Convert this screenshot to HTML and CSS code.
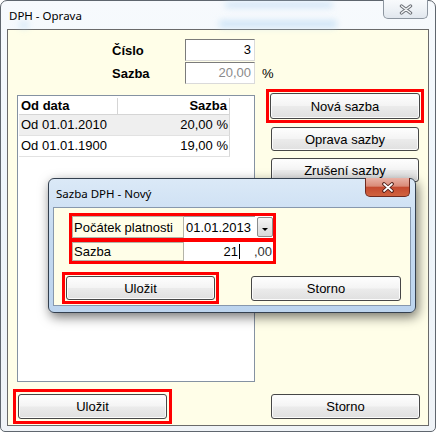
FILE: index.html
```html
<!DOCTYPE html>
<html lang="cs">
<head>
<meta charset="utf-8">
<title>DPH - Oprava</title>
<link rel="stylesheet" href="styles.css">
</head>
<body>
<div class="win">
  <div class="titlebar">
    <span class="title">DPH - Oprava</span>
    <span class="glass g1"></span>
    <span class="glass g2"></span>
    <span class="glass g3"></span>
    <button class="close" aria-label="Zavřít">
      <svg width="14" height="11" viewBox="0 0 14 11"><path d="M2.5 2 L11.5 9 M11.5 2 L2.5 9" stroke="#6d7177" stroke-width="3.4" stroke-linecap="round" fill="none"/><path d="M2.5 2 L11.5 9 M11.5 2 L2.5 9" stroke="#f4f6f8" stroke-width="1.4" stroke-linecap="round" fill="none"/></svg>
    </button>
  </div>
  <div class="client">
    <div class="form">
      <span class="flabel">Číslo</span>
      <span class="inp">3</span>
      <span></span>
      <span class="flabel">Sazba</span>
      <span class="inp dis">20,00</span>
      <span class="pct">%</span>
    </div>
    <div class="main">
      <div class="list">
        <div class="row head"><span class="c1">Od data</span><span class="c2">Sazba</span></div>
        <div class="row data alt"><span class="c1">Od 01.01.2010</span><span class="c2">20,00 %</span></div>
        <div class="row data"><span class="c1">Od 01.01.1900</span><span class="c2">19,00 %</span></div>
      </div>
      <div class="actions">
        <div class="hl"><button class="btn big">Nová sazba</button></div>
        <button class="btn side first">Oprava sazby</button>
        <button class="btn side second">Zrušení sazby</button>
      </div>
    </div>
    <div class="footer">
      <div class="hl wide"><button class="btn foot">Uložit</button></div>
      <button class="btn foot">Storno</button>
    </div>
  </div>

  <div class="dlg">
    <div class="dtitle">
      <span class="title dt">Sazba DPH - Nový</span>
      <button class="dclose" aria-label="Zavřít">
        <svg width="14" height="11" viewBox="0 0 14 11"><path d="M3 2 L11 9 M11 2 L3 9" stroke="#4a1a14" stroke-width="3.6" stroke-linecap="round" fill="none"/><path d="M3 2 L11 9 M11 2 L3 9" stroke="#ffffff" stroke-width="1.7" stroke-linecap="round" fill="none"/></svg>
      </button>
    </div>
    <div class="dclient">
      <div class="fields">
        <div class="frow r1">
          <span class="lab">Počátek platnosti</span>
          <span class="val">
            <span class="date">01.01.2013</span>
            <span class="dd"><span class="tri"></span></span>
          </span>
        </div>
        <div class="frow r2">
          <span class="lab">Sazba</span>
          <span class="val">
            <span class="num">21</span><span class="caret"></span><span class="dec">,00</span>
          </span>
        </div>
      </div>
      <div class="dbtns">
        <div class="hl"><button class="btn dbtn">Uložit</button></div>
        <button class="btn dbtn storno">Storno</button>
      </div>
    </div>
  </div>
</div>
</body>
</html>
```
FILE: styles.css
```css
html, body {
  margin: 0;
  padding: 0;
}
body {
  width: 436px;
  height: 432px;
  overflow: hidden;
  background: #ffffff;
  font-family: "Liberation Sans", Arial, sans-serif;
  font-size: 13px;
  color: #000;
}
.win {
  position: relative;
  box-sizing: border-box;
  width: 436px;
  height: 432px;
  border: 1px solid #5f666e;
  border-radius: 7px 7px 5px 5px;
  background: linear-gradient(180deg, #f7fafd 0%, #eef5fb 45%, #eff3f7 100%);
  padding: 0 6px 5px;
  display: flex;
  flex-direction: column;
}
.titlebar {
  position: relative;
  height: 28px;
  flex: none;
  display: flex;
  align-items: center;
}
.title {
  position: relative;
  z-index: 1;
  font-family: "Noto Sans", "DejaVu Sans", sans-serif;
  font-size: 11.5px;
  margin-left: 2px;
  color: #000;
}
.glass {
  position: absolute;
  background: #b4d6f2;
  filter: blur(3px);
  border-radius: 3px;
  opacity: .55;
}
.g1 { left: 218px; top: 1px; width: 108px; height: 6px; }
.g2 { left: 212px; top: 19px; width: 118px; height: 8px; }
.g3 { left: 12px; top: 20px; width: 10px; height: 8px; opacity: .4; }
.close {
  position: relative;
  z-index: 1;
  margin-left: auto;
  margin-right: 1px;
  align-self: flex-start;
  margin-top: -1px;
  box-sizing: border-box;
  width: 45px;
  height: 19px;
  padding: 0;
  border: 1px solid #8d96a0;
  border-top: none;
  border-radius: 0 0 5px 5px;
  background: linear-gradient(180deg, #f8fafc 0%, #eef2f6 50%, #e1e7ee 100%);
  display: flex;
  align-items: center;
  justify-content: center;
}
.client {
  flex: 1;
  border: 1px solid #6a6a6a;
  background: #fffee8;
  display: flex;
  flex-direction: column;
  padding: 9px 0 1px 0;
  min-height: 0;
}
.form {
  display: grid;
  grid-template-columns: 73px 70px auto;
  grid-auto-rows: 22px;
  row-gap: 1px;
  margin-left: 104px;
  align-items: center;
}
.flabel {
  font-weight: bold;
}
.inp {
  box-sizing: border-box;
  height: 22px;
  background: #fff;
  border: 1px solid;
  border-color: #7b7b7b #dadada #dadada #7b7b7b;
  text-align: right;
  padding-right: 3px;
  line-height: 20px;
}
.inp.dis {
  color: #8a8a8a;
}
.pct {
  padding-left: 7px;
}
.main {
  display: flex;
  align-items: flex-start;
  margin: 5px 0 0 9px;
}
.list {
  box-sizing: border-box;
  width: 238px;
  height: 287px;
  margin-top: 6px;
  border: 1px solid #8592a2;
  background: #fff;
  padding: 2px 0 0 1px;
}
.row {
  display: grid;
  grid-template-columns: 99px 112px;
  width: 211px;
}
.row span {
  box-sizing: border-box;
  white-space: nowrap;
}
.row.head span {
  height: 17px;
  line-height: 16px;
  font-weight: bold;
  border-bottom: 1px solid #d5d5d5;
  border-right: 1px solid #d5d5d5;
  padding: 0 2px 0 2px;
}
.row .c2 {
  text-align: right;
}
.row.data {
  height: 21px;
  border-bottom: 1px solid #e2e2e2;
  border-right: 1px solid #d8d8d8;
  box-sizing: border-box;
  line-height: 20px;
}
.row.data span {
  padding: 0 2px;
}
.row.alt {
  background: #efefef;
}
.actions {
  display: flex;
  flex-direction: column;
  margin-left: 11px;
  width: 158px;
}
.hl {
  border: 3px solid #ff0000;
  padding: 1px;
  flex: none;
}
.btn {
  box-sizing: border-box;
  width: 148px;
  height: 24px;
  padding: 0;
  font-family: "Liberation Sans", Arial, sans-serif;
  font-size: 13px;
  color: #000;
  border: 1px solid #474747;
  border-radius: 3px;
  background: linear-gradient(180deg, #fefefe 0%, #f4f4f4 48%, #ebebeb 52%, #e0e0e0 100%);
  box-shadow: inset 0 0 0 1px #fbfbfb;
  display: flex;
  align-items: center;
  justify-content: center;
}
.btn.big {
  width: 150px;
  height: 26px;
}
.btn.side {
  margin-left: 5px;
}
.btn.first { margin-top: 4px; }
.btn.second { margin-top: 7px; }
.footer {
  margin-top: auto;
  display: flex;
  justify-content: space-between;
  align-items: center;
  padding: 0 8px 0 5px;
}
.hl.wide {
  padding: 2px;
}
.btn.foot {
  width: 149px;
  height: 25px;
}

/* dialog window overlay */
.dlg {
  position: absolute;
  left: 47px;
  top: 177px;
  box-sizing: border-box;
  width: 368px;
  height: 135px;
  border: 1px solid #34404f;
  border-radius: 6px;
  background: linear-gradient(180deg, #dbe9f7 0%, #c6dbf1 40%, #bcd4ee 100%);
  padding: 0 4px 6px;
  display: flex;
  flex-direction: column;
  box-shadow: 2px 4px 12px rgba(0, 0, 0, .55);
}
.dtitle {
  height: 28px;
  flex: none;
  display: flex;
  align-items: center;
}
.title.dt {
  margin-left: 3px;
}
.dclose {
  margin-left: auto;
  margin-right: 1px;
  margin-top: -1px;
  align-self: flex-start;
  box-sizing: border-box;
  width: 45px;
  height: 19px;
  padding: 0;
  border: 1px solid #6e2a20;
  border-top: none;
  border-radius: 0 0 5px 5px;
  background: linear-gradient(180deg, #e9b2a6 0%, #da8b78 45%, #c54a30 52%, #d0633f 100%);
  display: flex;
  align-items: center;
  justify-content: center;
}
.dclient {
  flex: 1;
  border: 1px solid #8798ad;
  background: #fffee8;
  padding-top: 5px;
}
.fields {
  margin-left: 15px;
  width: 207px;
}
.frow {
  display: flex;
  border: 3px solid #ff0000;
}
.frow.r1 {
  height: 22px;
  border-bottom-width: 2px;
}
.frow.r2 {
  height: 19px;
  border-top-width: 2px;
}
.lab {
  box-sizing: border-box;
  width: 112px;
  border: 1px solid #b4b4a8;
  background: #fffee8;
  padding-left: 1px;
  display: flex;
  align-items: center;
  white-space: nowrap;
}
.val {
  flex: 1;
  display: flex;
  align-items: center;
  background: #fff;
}
.date {
  box-sizing: border-box;
  width: 71px;
  height: 100%;
  text-align: right;
  padding-right: 4px;
  line-height: 22px;
  border-top: 1px solid #9a9a9a;
}
.dd {
  box-sizing: border-box;
  width: 16px;
  height: 20px;
  margin-left: 2px;
  border: 1px solid #8c8c8c;
  border-radius: 2px;
  background: linear-gradient(180deg, #f6f6f6 0%, #e6e6e6 50%, #d9d9d9 100%);
  display: flex;
  align-items: center;
  justify-content: center;
}
.tri {
  width: 0;
  height: 0;
  border-left: 3px solid transparent;
  border-right: 3px solid transparent;
  border-top: 3px solid #000;
  margin-top: 4px;
}
.num {
  box-sizing: border-box;
  width: 54px;
  text-align: right;
}
.caret {
  width: 1px;
  height: 15px;
  background: #000;
  margin-left: 1px;
}
.dec {
  margin-left: auto;
  padding-right: 1px;
  color: #333;
}
.dbtns {
  display: flex;
  align-items: flex-start;
  margin: 8px 0 0 8px;
}
.btn.dbtn {
  width: 149px;
  height: 24px;
}
.btn.storno {
  width: 150px;
  height: 25px;
  margin-left: 32px;
  margin-top: 4px;
}
```
